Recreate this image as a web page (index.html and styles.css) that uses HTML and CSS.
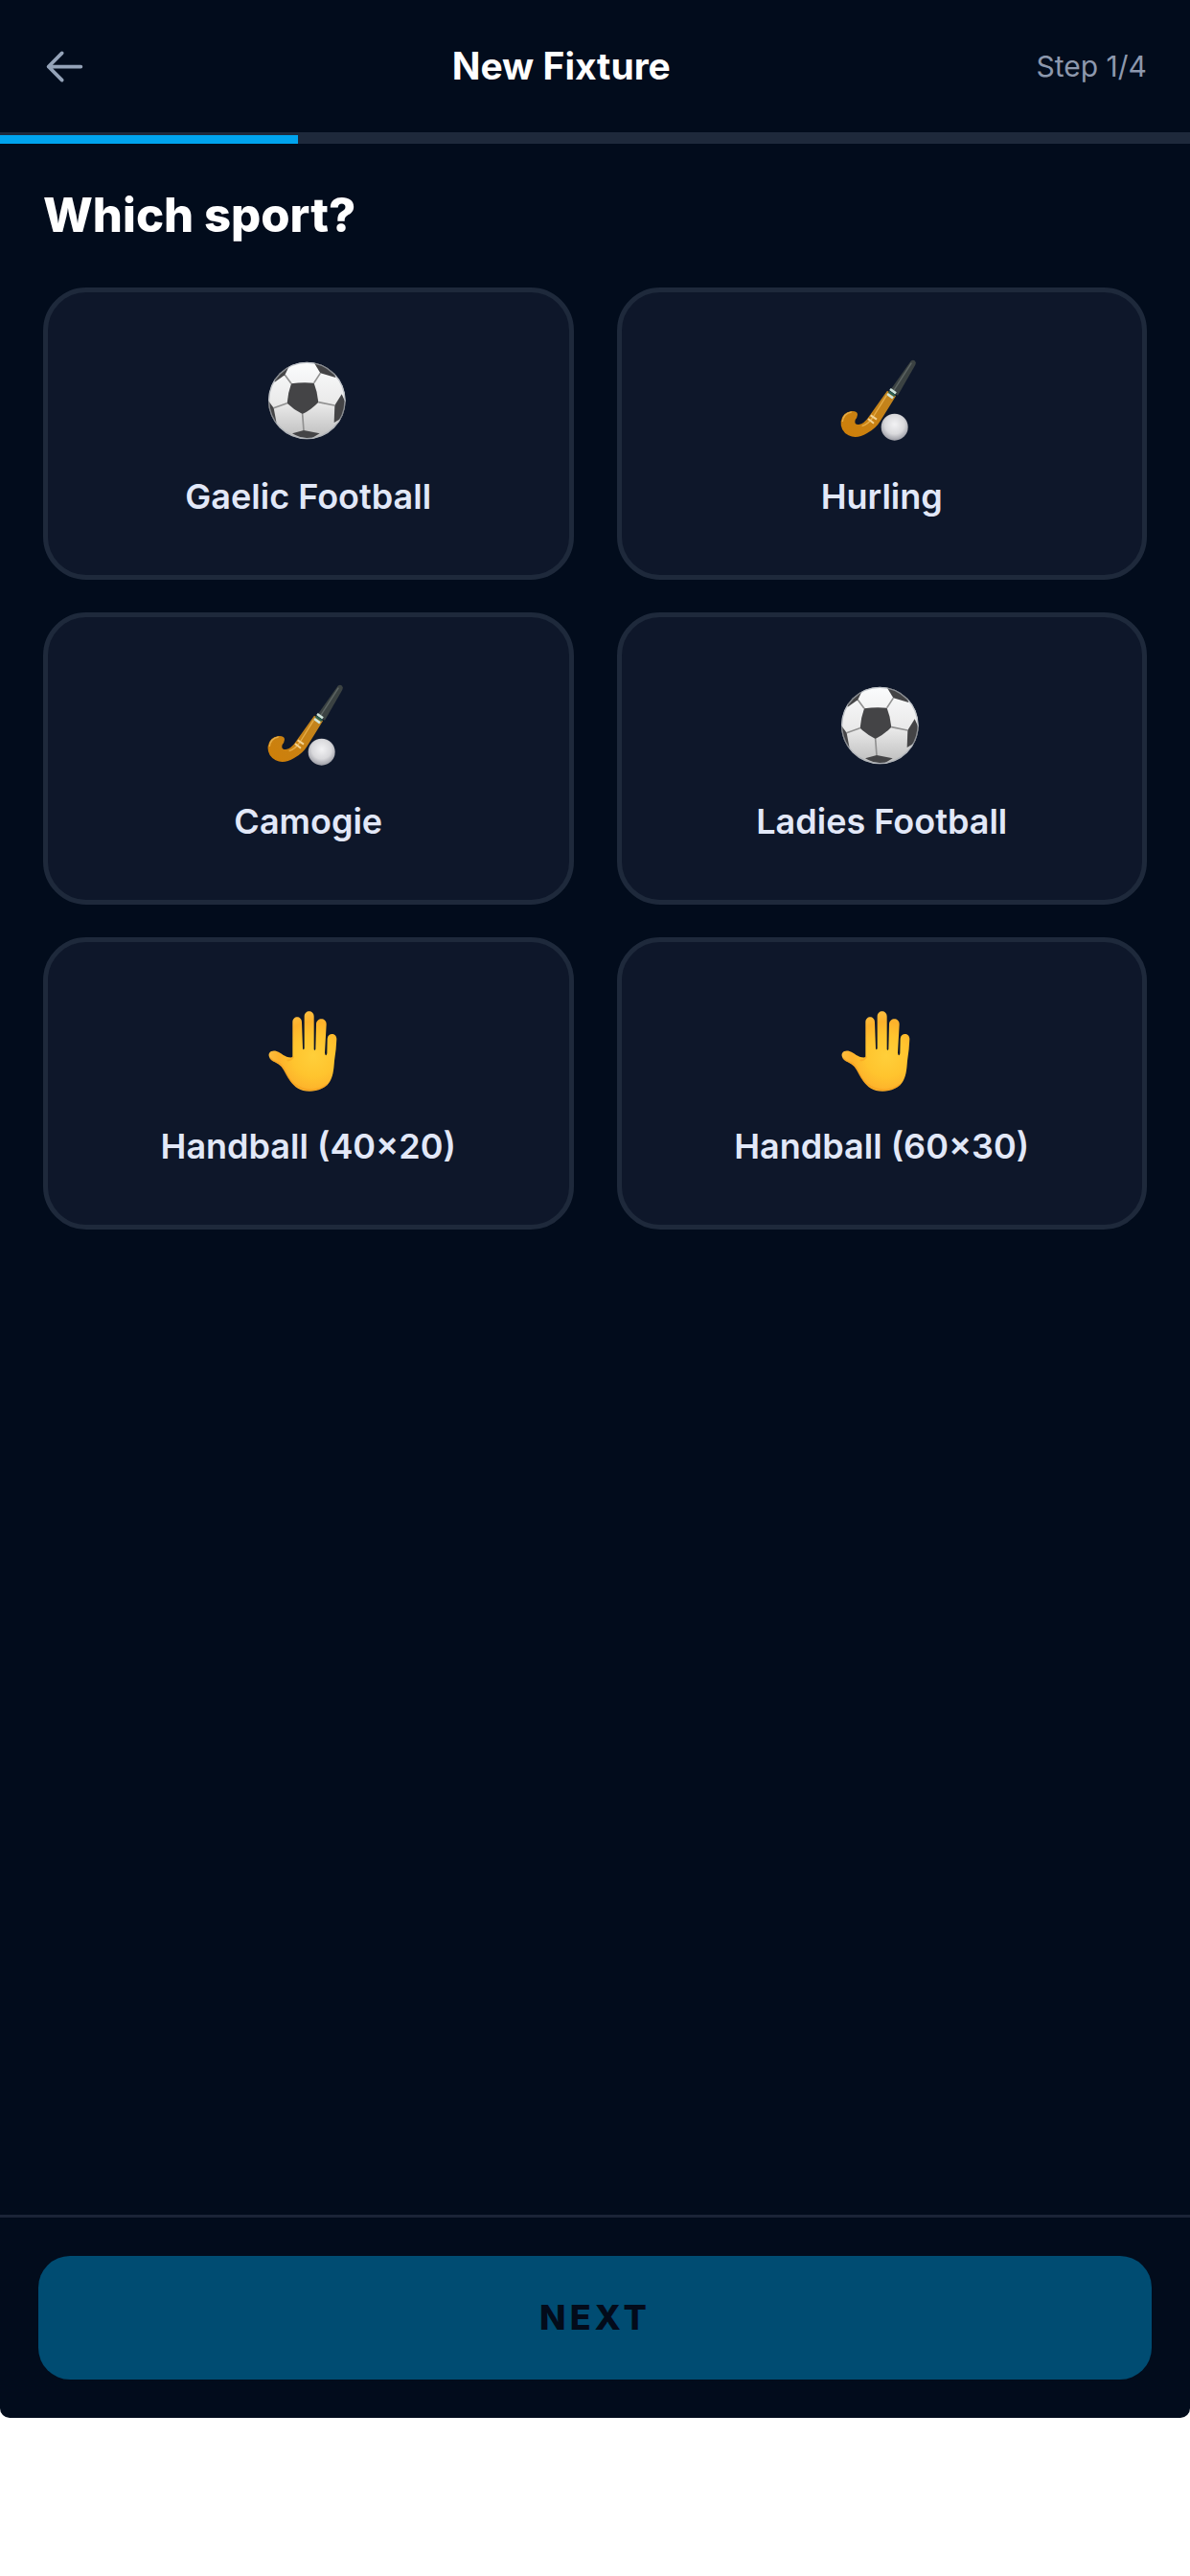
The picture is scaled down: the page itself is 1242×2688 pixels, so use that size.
FILE: index.html
```html
<!DOCTYPE html>
<html lang="en">
<head>
    <meta charset="UTF-8">
    <meta name="viewport" content="width=device-width, initial-scale=1.0">
    <title>New Fixture</title>
    <link rel="stylesheet" href="styles.css">
</head>
<body>
    <!-- Shared sport icons -->
    <svg class="icon-defs" aria-hidden="true">
        <defs>
            <linearGradient id="ball-shade" x1="0" y1="0" x2="0" y2="1">
                <stop offset="0" stop-color="#fbfcfd"/>
                <stop offset="0.55" stop-color="#e9e9e9"/>
                <stop offset="1" stop-color="#bcbcbc"/>
            </linearGradient>
            <radialGradient id="small-ball-shade" cx="0.5" cy="0.4" r="0.6">
                <stop offset="0" stop-color="#f2f2f4"/>
                <stop offset="0.6" stop-color="#d9d9dc"/>
                <stop offset="1" stop-color="#9b9ca4"/>
            </radialGradient>
            <linearGradient id="stick-shade" x1="0" y1="1" x2="1" y2="0">
                <stop offset="0" stop-color="#cf7f08"/>
                <stop offset="1" stop-color="#c08420"/>
            </linearGradient>
            <radialGradient id="hand-shade" gradientUnits="userSpaceOnUse" cx="200" cy="210" r="145">
                <stop offset="0" stop-color="#ffcf3a"/>
                <stop offset="0.45" stop-color="#ffc42e"/>
                <stop offset="0.75" stop-color="#fdb22b"/>
                <stop offset="1" stop-color="#fdbf42"/>
            </radialGradient>
            <clipPath id="ball-clip"><circle cx="209" cy="204" r="121"/></clipPath>

            <symbol id="icon-ball" viewBox="82 75 264 264">
                <circle cx="209" cy="204" r="121" fill="url(#ball-shade)"/>
                <g clip-path="url(#ball-clip)">
                    <g fill="none" stroke="#919191" stroke-width="5">
                        <path d="M160 151 140 124M231 149l20-31M245 209l50 10M195 246l4 52M147 212l-42 15"/>
                    </g>
                    <g fill="#444446">
                        <path d="M160 151q36-6 71-2 11 28 14 60-22 23-50 37-28-14-48-34 3-34 13-61z"/>
                        <path d="M228 80l23 38 48 14-4-20-35-32z"/>
                        <path d="M158 86l-18 38-32 22-2-20 30-34z"/>
                        <path d="M318 184l-22 35-2 54 24-14 16-40z"/>
                        <path d="M85 200l20 27 9 48-22-20z"/>
                        <path d="M163 307l36-10 50 10-24 14q-32 4-62-14z"/>
                    </g>
                    <circle cx="209" cy="204" r="119" fill="none" stroke="#a7adb3" stroke-width="4" opacity="0.7"/>
                </g>
            </symbol>

            <symbol id="icon-stick" viewBox="50 45 264 264">
                <path d="M274 50q7-5 13 0 5 5 1 12l-55 96-25-15z" fill="#3b4242"/>
                <path d="M276 56l-58 90" fill="none" stroke="#5f6665" stroke-width="4"/>
                <path d="M200 143l27 17-48 77q-14 24-42 39-32 19-58 7-27-15-24-44 4-28 33-32 19-1 19 11-1 9-7 16-5 16 11 15 17-3 31-24z" fill="url(#stick-shade)"/>
                <path d="M198 158l-44 70q-14 20-33 26M60 240q3-26 28-30" fill="none" stroke="#e6ad48" stroke-width="4"/>
                <path d="M209 138l18 13M200 153l18 13" fill="none" stroke="#cfe5dc" stroke-width="8"/>
                <path d="M205 146l19 13" fill="none" stroke="#2d6251" stroke-width="7"/>
                <path d="M148 220l19 13M140 231l18 14" fill="none" stroke="#f2d292" stroke-width="6"/>
                <circle cx="223" cy="257" r="42" fill="url(#small-ball-shade)"/>
            </symbol>

            <symbol id="icon-hand" viewBox="52 63 264 264">
                <path d="M134 214V104C134 82 163 82 163 104L166 186Q168 194 171 186V86C171 64 201 64 201 86V188Q203 195 206 188L208 110C209 88 240 88 240 110L235 200Q238 214 242 202L243 156C244 136 272 136 272 157Q271 188 265 225C263 255 260 276 250 291C238 309 215 320 187 320C158 320 140 307 127 288C115 271 109 255 99 243C86 229 70 228 62 215C54 199 69 190 84 195C102 201 109 216 134 214Z" fill="url(#hand-shade)"/>
                <path d="M64 216q6 8 21 13 14 5 24 24 12 28 28 43 24 21 58 20 30-3 47-17" fill="none" stroke="#f39a1b" stroke-width="5" opacity="0.55"/>
                <path d="M136 213q-5 9-17 10" fill="none" stroke="#f5a222" stroke-width="5" opacity="0.6" stroke-linecap="round"/>
            </symbol>
        </defs>
    </svg>

    <div class="app">
        <header class="header">
            <button type="button" class="back-button" aria-label="Back">
                <svg viewBox="0 0 24 24" fill="none" stroke="currentColor" stroke-width="2" stroke-linecap="round" stroke-linejoin="round">
                    <path d="M10.5 19.5 3 12l7.5-7.5M3 12h18"/>
                </svg>
            </button>
            <h1>New Fixture</h1>
            <span class="step">Step 1/4</span>
        </header>
        <div class="progress" role="progressbar" aria-label="Step" aria-valuemin="0" aria-valuemax="4" aria-valuenow="1">
            <div class="progress-fill"></div>
        </div>

        <main class="content">
            <h2>Which sport?</h2>
            <div class="sport-grid">
                <button type="button" class="sport-card">
                    <svg class="sport-icon" aria-hidden="true"><use href="#icon-ball"/></svg>
                    <span>Gaelic Football</span>
                </button>
                <button type="button" class="sport-card">
                    <svg class="sport-icon" aria-hidden="true"><use href="#icon-stick"/></svg>
                    <span>Hurling</span>
                </button>
                <button type="button" class="sport-card">
                    <svg class="sport-icon" aria-hidden="true"><use href="#icon-stick"/></svg>
                    <span>Camogie</span>
                </button>
                <button type="button" class="sport-card">
                    <svg class="sport-icon" aria-hidden="true"><use href="#icon-ball"/></svg>
                    <span>Ladies Football</span>
                </button>
                <button type="button" class="sport-card">
                    <svg class="sport-icon" aria-hidden="true"><use href="#icon-hand"/></svg>
                    <span>Handball (40×20)</span>
                </button>
                <button type="button" class="sport-card">
                    <svg class="sport-icon" aria-hidden="true"><use href="#icon-hand"/></svg>
                    <span>Handball (60×30)</span>
                </button>
            </div>
        </main>

        <footer class="footer">
            <button type="button" class="next-button" disabled>NEXT</button>
        </footer>
    </div>
</body>
</html>
```
FILE: styles.css
```css
* {
    box-sizing: border-box;
}
body {
    display: flex;
    flex-direction: column;
    min-height: 100vh;
    margin: 0;
    padding-bottom: 165px;
    background-color: #fff;
    font-family: Inter, "Liberation Sans", sans-serif;
}
button {
    font-family: inherit;
    cursor: pointer;
}
h1, h2 {
    margin: 0;
    color: #fff;
}
.icon-defs {
    position: absolute;
    width: 0;
    height: 0;
}
.app {
    flex: 1;
    display: flex;
    flex-direction: column;
    background-color: #020c1c;
    border-radius: 0 0 10px 10px;
}
.header {
    display: flex;
    align-items: center;
    justify-content: space-between;
    padding: 45px;
    border-bottom: 3px solid #1e293b;
}
.header h1 {
    font-size: 39px;
    line-height: 48px;
    font-weight: 700;
}
.back-button {
    display: flex;
    width: 45px;
    height: 45px;
    padding: 0;
    border: none;
    background: none;
    color: #94a3b8;
}
.step {
    font-size: 30px;
    line-height: 45px;
    color: #8d98ad;
}
.progress {
    height: 9px;
    background-color: #1e293b;
}
.progress-fill {
    width: 25%;
    height: 100%;
    background-color: #00a4ee;
}
.content {
    flex: 1;
    padding: 45px;
}
.content h2 {
    margin-bottom: 45px;
    font-size: 49px;
    line-height: 60px;
    font-weight: 800;
}
.sport-grid {
    display: grid;
    grid-template-columns: 1fr 1fr;
    gap: 34px 45px;
}
.sport-card {
    display: flex;
    flex-direction: column;
    align-items: center;
    gap: 33px;
    padding: 70px 20px 59px;
    border: 5px solid #1e293b;
    border-radius: 45px;
    background-color: #0e172a;
    color: #e2e8f8;
    font-size: 36px;
    line-height: 45px;
    font-weight: 600;
}
.sport-icon {
    width: 88px;
    height: 88px;
}
.footer {
    padding: 40px;
    border-top: 3px solid #1b2437;
}
.next-button {
    display: block;
    width: 100%;
    padding: 42px;
    border: none;
    border-radius: 33px;
    background-color: #004c72;
    color: #030b1a;
    font-size: 36px;
    line-height: 45px;
    font-weight: 800;
    letter-spacing: 4px;
}
.next-button:disabled {
    cursor: not-allowed;
}
```
